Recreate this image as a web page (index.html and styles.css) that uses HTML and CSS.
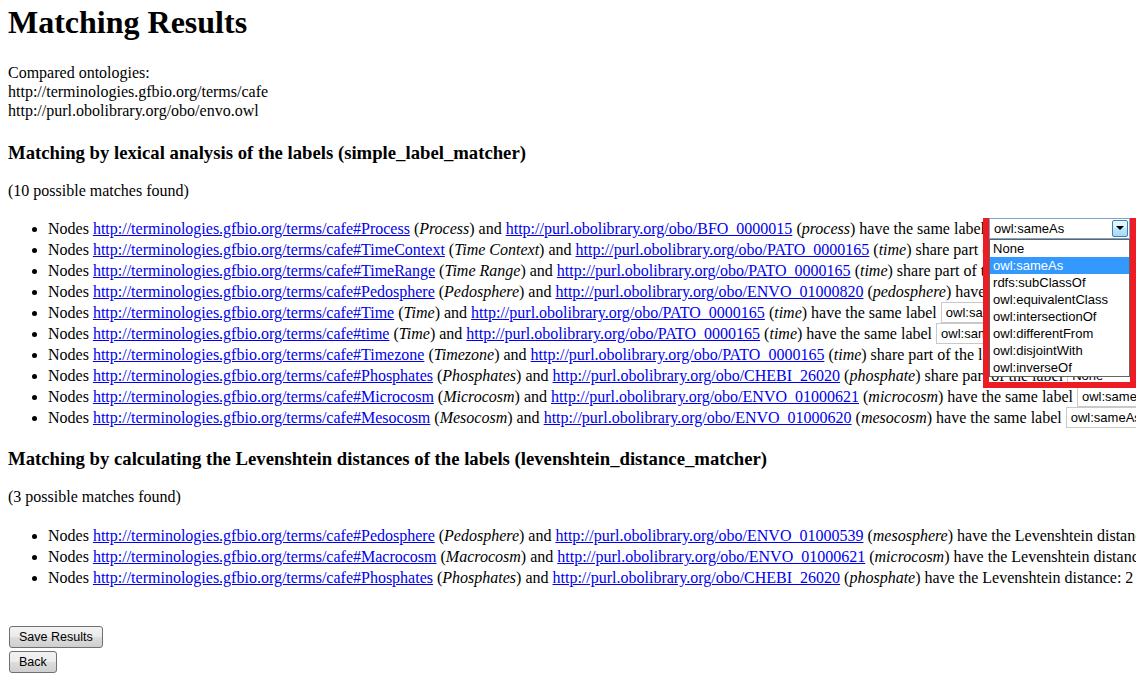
FILE: index.html
```html
<!DOCTYPE html>
<html>
<head>
<meta charset="utf-8">
<title>Matching Results</title>
<link rel="stylesheet" href="styles.css">
</head>
<body>
<h1 class="title">Matching Results</h1>
<p class="compared">Compared ontologies:<br>http://terminologies.gfbio.org/terms/cafe<br>http://purl.obolibrary.org/obo/envo.owl</p>

<h3 class="section-title first">Matching by lexical analysis of the labels (simple_label_matcher)</h3>
<p class="count first">(10 possible matches found)</p>
<ul class="matches first">
  <li>Nodes <a href="#">http://terminologies.gfbio.org/terms/cafe#Process</a> (<i>Process</i>) and <a href="#">http://purl.obolibrary.org/obo/BFO_0000015</a> (<i>process</i>) have the same label <span class="sel focused">owl:sameAs<span class="sel-btn"><span class="tri"></span></span><span class="sel-list"><span class="opt">None</span><span class="opt active">owl:sameAs</span><span class="opt">rdfs:subClassOf</span><span class="opt">owl:equivalentClass</span><span class="opt">owl:intersectionOf</span><span class="opt">owl:differentFrom</span><span class="opt">owl:disjointWith</span><span class="opt">owl:inverseOf</span></span><span class="highlight"></span></span></li>
  <li>Nodes <a href="#">http://terminologies.gfbio.org/terms/cafe#TimeContext</a> (<i>Time Context</i>) and <a href="#">http://purl.obolibrary.org/obo/PATO_0000165</a> (<i>time</i>) share part of the label <span class="sel">None<span class="arr">&#9662;</span></span></li>
  <li>Nodes <a href="#">http://terminologies.gfbio.org/terms/cafe#TimeRange</a> (<i>Time Range</i>) and <a href="#">http://purl.obolibrary.org/obo/PATO_0000165</a> (<i>time</i>) share part of the label <span class="sel">None<span class="arr">&#9662;</span></span></li>
  <li>Nodes <a href="#">http://terminologies.gfbio.org/terms/cafe#Pedosphere</a> (<i>Pedosphere</i>) and <a href="#">http://purl.obolibrary.org/obo/ENVO_01000820</a> (<i>pedosphere</i>) have the same label <span class="sel">owl:sameAs<span class="arr">&#9662;</span></span></li>
  <li>Nodes <a href="#">http://terminologies.gfbio.org/terms/cafe#Time</a> (<i>Time</i>) and <a href="#">http://purl.obolibrary.org/obo/PATO_0000165</a> (<i>time</i>) have the same label <span class="sel">owl:sameAs<span class="arr">&#9662;</span></span></li>
  <li>Nodes <a href="#">http://terminologies.gfbio.org/terms/cafe#time</a> (<i>Time</i>) and <a href="#">http://purl.obolibrary.org/obo/PATO_0000165</a> (<i>time</i>) have the same label <span class="sel">owl:sameAs<span class="arr">&#9662;</span></span></li>
  <li>Nodes <a href="#">http://terminologies.gfbio.org/terms/cafe#Timezone</a> (<i>Timezone</i>) and <a href="#">http://purl.obolibrary.org/obo/PATO_0000165</a> (<i>time</i>) share part of the label <span class="sel">None<span class="arr">&#9662;</span></span></li>
  <li>Nodes <a href="#">http://terminologies.gfbio.org/terms/cafe#Phosphates</a> (<i>Phosphates</i>) and <a href="#">http://purl.obolibrary.org/obo/CHEBI_26020</a> (<i>phosphate</i>) share part of the label <span class="sel">None<span class="arr">&#9662;</span></span></li>
  <li>Nodes <a href="#">http://terminologies.gfbio.org/terms/cafe#Microcosm</a> (<i>Microcosm</i>) and <a href="#">http://purl.obolibrary.org/obo/ENVO_01000621</a> (<i>microcosm</i>) have the same label <span class="sel">owl:sameAs<span class="arr">&#9662;</span></span></li>
  <li>Nodes <a href="#">http://terminologies.gfbio.org/terms/cafe#Mesocosm</a> (<i>Mesocosm</i>) and <a href="#">http://purl.obolibrary.org/obo/ENVO_01000620</a> (<i>mesocosm</i>) have the same label <span class="sel">owl:sameAs<span class="arr">&#9662;</span></span></li>
</ul>

<h3 class="section-title second">Matching by calculating the Levenshtein distances of the labels (levenshtein_distance_matcher)</h3>
<p class="count second">(3 possible matches found)</p>
<ul class="matches second">
  <li>Nodes <a href="#">http://terminologies.gfbio.org/terms/cafe#Pedosphere</a> (<i>Pedosphere</i>) and <a href="#">http://purl.obolibrary.org/obo/ENVO_01000539</a> (<i>mesosphere</i>) have the Levenshtein distance: 3 <span class="sel">None<span class="arr">&#9662;</span></span></li>
  <li>Nodes <a href="#">http://terminologies.gfbio.org/terms/cafe#Macrocosm</a> (<i>Macrocosm</i>) and <a href="#">http://purl.obolibrary.org/obo/ENVO_01000621</a> (<i>microcosm</i>) have the Levenshtein distance: 2 <span class="sel">None<span class="arr">&#9662;</span></span></li>
  <li>Nodes <a href="#">http://terminologies.gfbio.org/terms/cafe#Phosphates</a> (<i>Phosphates</i>) and <a href="#">http://purl.obolibrary.org/obo/CHEBI_26020</a> (<i>phosphate</i>) have the Levenshtein distance: 2 <span class="sel">None<span class="arr">&#9662;</span></span></li>
</ul>

<div class="actions">
  <button class="btn" type="button">Save Results</button>
  <button class="btn" type="button">Back</button>
</div>
</body>
</html>
```

FILE: styles.css
```css
html {
  overflow: hidden;
  background: #fff;
}

body {
  margin: 0 8px;
  font-family: "Liberation Serif", "Times New Roman", serif;
  font-size: 16px;
  color: #000;
}

.title {
  font-size: 32px;
  font-weight: bold;
  line-height: 37px;
  margin: 4px 0 22px;
}

.compared {
  margin: 0;
  line-height: 19px;
}

.section-title {
  font-size: 18.72px;
  font-weight: bold;
  line-height: 21.5px;
  white-space: nowrap;
}

.section-title.first {
  margin: 22px 0 18px;
}

.section-title.second {
  margin: 20px 0 19px;
}

.count {
  margin: 0;
  line-height: 18.4px;
}

.matches {
  padding-left: 40px;
  list-style: disc;
  overflow: hidden;
  margin-right: -16px;
}

.matches.first {
  margin-top: 18px;
  margin-bottom: 20px;
}

.matches.second {
  margin-top: 18px;
  margin-bottom: 38px;
}

.matches li {
  line-height: 21px;
  height: 21px;
  white-space: nowrap;
}

.matches a {
  color: #0000ee;
  text-decoration: underline;
}

/* select-like control */
.sel {
  display: inline-block;
  position: relative;
  box-sizing: border-box;
  width: 141px;
  height: 21px;
  vertical-align: top;
  border: 1px solid #c9c9c9;
  background: #fff;
  font-family: "Liberation Sans", Arial, sans-serif;
  font-size: 13px;
  line-height: 19px;
  padding-left: 4px;
  color: #000;
  text-align: left;
}

.sel .arr {
  position: absolute;
  right: 4px;
  top: 0;
  font-size: 12px;
  line-height: 19px;
  color: #333;
}

.sel.focused {
  border-color: #7da2ce;
  z-index: 5;
}

.sel-btn {
  position: absolute;
  right: 1px;
  top: 1px;
  bottom: 1px;
  width: 16px;
  box-sizing: border-box;
  border: 1px solid #3c7fb1;
  border-radius: 2px;
  background: linear-gradient(#eaf6fd, #d9f0fc 45%, #bee6fd 50%, #a7d9f5);
  display: flex;
  align-items: center;
  justify-content: center;
}

.tri {
  width: 0;
  height: 0;
  border-left: 4px solid transparent;
  border-right: 4px solid transparent;
  border-top: 4px solid #000;
}

.sel-list {
  position: absolute;
  left: -1px;
  top: 20px;
  width: 141px;
  box-sizing: border-box;
  border: 1px solid #646464;
  background: #fff;
  display: flex;
  flex-direction: column;
  z-index: 6;
}

.opt {
  display: block;
  height: 17px;
  line-height: 17px;
  padding-left: 3px;
  color: #000;
}

.opt.active {
  background: #3399ff;
  color: #fff;
}

/* annotation rectangle over the open dropdown */
.highlight {
  position: absolute;
  left: -7px;
  top: -10px;
  width: 153px;
  height: 179px;
  box-sizing: border-box;
  border: 6px solid #ed1c24;
  z-index: 7;
  pointer-events: none;
}

.actions {
  display: flex;
  flex-direction: column;
  align-items: flex-start;
  gap: 3px;
  padding-left: 1px;
}

.btn {
  height: 22px;
  box-sizing: border-box;
  margin: 0;
  padding: 0 9px;
  border: 1px solid #707070;
  border-radius: 3px;
  background: linear-gradient(#f2f2f2, #ebebeb 50%, #dddddd 50%, #cfcfcf);
  font-family: "Liberation Sans", Arial, sans-serif;
  font-size: 12.5px;
  line-height: 20px;
  color: #000;
}
```
